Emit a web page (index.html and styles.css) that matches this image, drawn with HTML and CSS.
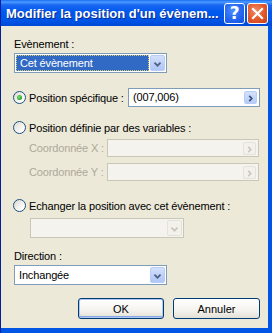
FILE: index.html
```html
<!DOCTYPE html>
<html lang="fr">
<head>
<meta charset="utf-8">
<title>Modifier la position</title>
<link rel="stylesheet" href="styles.css">
</head>
<body>
<div class="win">
  <div class="titlebar">
    <span class="title">Modifier la position d'un évènem...</span>
    <div class="tbtns">
      <span class="tb help">?</span>
      <span class="tb close"><svg width="19" height="19" viewBox="0 0 19 19"><path d="M5 5 L14 14 M14 5 L5 14" stroke="#fff" stroke-width="2.2" fill="none" stroke-linecap="square"/></svg></span>
    </div>
  </div>
  <div class="client">
    <div class="lbl">Evènement :</div>
    <div class="combo c1">
      <div class="val selected"><span>Cet évènement</span></div>
      <span class="arr"><svg width="15" height="16" viewBox="0 0 15 16"><path d="M4 6.5 L7.5 10 L11 6.5" stroke="#4d6185" stroke-width="2" fill="none"/></svg></span>
    </div>

    <div class="row r1">
      <span class="radio on"></span>
      <span class="rlabel w1">Position spécifique :</span>
      <div class="field f1">
        <span class="ftext">(007,006)</span>
        <span class="fbtn"><svg width="13" height="13" viewBox="0 0 13 13"><path d="M5 3.5 L8 6.5 L5 9.5" stroke="#3a4f78" stroke-width="2" fill="none"/></svg></span>
      </div>
    </div>

    <div class="row r2">
      <span class="radio"></span>
      <span class="rlabel">Position définie par des variables :</span>
    </div>

    <div class="row coord cx">
      <span class="clabel">Coordonnée X :</span>
      <div class="field dis f2">
        <span class="ftext"></span>
        <span class="fbtn"><svg width="13" height="13" viewBox="0 0 13 13"><path d="M5 3.5 L8 6.5 L5 9.5" stroke="#c9c7ba" stroke-width="2" fill="none"/></svg></span>
      </div>
    </div>

    <div class="row coord cy">
      <span class="clabel">Coordonnée Y :</span>
      <div class="field dis f2">
        <span class="ftext"></span>
        <span class="fbtn"><svg width="13" height="13" viewBox="0 0 13 13"><path d="M5 3.5 L8 6.5 L5 9.5" stroke="#c9c7ba" stroke-width="2" fill="none"/></svg></span>
      </div>
    </div>

    <div class="row r3">
      <span class="radio"></span>
      <span class="rlabel">Echanger la position avec cet évènement :</span>
    </div>
    <div class="combo dis c2">
      <div class="val"></div>
      <span class="arr"><svg width="15" height="16" viewBox="0 0 15 16"><path d="M4 6.5 L7.5 10 L11 6.5" stroke="#c9c7ba" stroke-width="2" fill="none"/></svg></span>
    </div>

    <div class="lbl l2">Direction :</div>
    <div class="combo c3">
      <div class="val"><span>Inchangée</span></div>
      <span class="arr"><svg width="15" height="16" viewBox="0 0 15 16"><path d="M4 6.5 L7.5 10 L11 6.5" stroke="#4d6185" stroke-width="2" fill="none"/></svg></span>
    </div>

    <div class="buttons">
      <button class="btn default">OK</button>
      <button class="btn cancel">Annuler</button>
    </div>
  </div>
</div>
</body>
</html>
```
FILE: styles.css
```css
* { box-sizing: border-box; }
html, body { margin: 0; padding: 0; }
body {
  width: 272px;
  height: 333px;
  overflow: hidden;
  font-family: "Liberation Sans", Arial, sans-serif;
  font-size: 11px;
  letter-spacing: -0.15px;
  color: #000;
  background: #0055e5;
}
.win {
  width: 272px;
  height: 333px;
  display: flex;
  flex-direction: column;
  background: #0055e5;
  border-left: 1px solid #00209a;
}
.titlebar {
  height: 26px;
  flex: none;
  display: flex;
  align-items: center;
  padding: 0 4px 0 5px;
  background: linear-gradient(#1a6cf4 0, #4b9bff 2px, #1a66f2 5px, #0058ee 12px, #0055e8 20px, #0049d6 26px);
}
.title {
  flex: 1;
  color: #fff;
  font-weight: bold;
  font-size: 13px;
  letter-spacing: 0;
  white-space: nowrap;
  text-shadow: 1px 1px 0 #0a2a8a;
  overflow: hidden;
}
.tbtns { display: flex; gap: 2px; }
.tb {
  width: 21px;
  height: 21px;
  border: 1px solid #fff;
  border-radius: 3px;
  display: flex;
  align-items: center;
  justify-content: center;
}
.help {
  background: radial-gradient(circle at 40% 35%, #4b8dff 0, #2a6df2 45%, #0f4fe0 100%);
  color: #fff;
  font-family: "DejaVu Sans", sans-serif;
  font-weight: bold;
  font-size: 17px;
  line-height: 1;
}
.close {
  background: radial-gradient(circle at 40% 35%, #f08b66 0, #e35a2e 50%, #c9401a 100%);
}
.client {
  flex: 1;
  background: #ece9d8;
  margin: 0 4px 5px 0;
  padding: 12px 8px 0 13px;
  display: flex;
  flex-direction: column;
}
.lbl { height: 13px; line-height: 13px; }
.l2 { margin-top: 12px; }

.combo {
  margin-top: 2px;
  width: 153px;
  height: 20px;
  border: 1px solid #7f9db9;
  background: #fff;
  display: flex;
  align-items: center;
  padding: 1px;
  flex: none;
}
.combo .val {
  flex: 1;
  height: 16px;
  line-height: 14px;
  padding: 0 2px;
  display: flex;
}
.combo .val span { padding: 1px 1px; }
.combo .val.selected {
  background: #316ac5;
  color: #fff;
  border: 1px dotted #d9c970;
  margin-right: 1px;
}
.combo .val.selected span { padding: 0 1px; }
.arr {
  width: 15px;
  height: 16px;
  border: 1px solid #b9ccf7;
  border-radius: 2px;
  background: linear-gradient(#d4e0fb, #bccff8 60%, #b0c6f6);
  display: flex;
}
.combo.dis {
  margin-top: 6px;
  margin-left: 16px;
  width: 154px;
  border-color: #c9c7ba;
  background: #f4f3ee;
}
.combo.dis .arr {
  border-color: #e4e2da;
  background: #f2f1eb;
}

.row { display: flex; align-items: center; flex: none; }
.r1 { height: 19px; margin-top: 15px; }
.r2 { height: 13px; margin-top: 14px; }
.r3 { height: 13px; margin-top: 18px; }
.cx { height: 18px; margin-top: 5px; }
.cy { height: 18px; margin-top: 6px; }

.radio {
  width: 13px;
  height: 13px;
  border-radius: 50%;
  border: 1px solid #1c5180;
  background: linear-gradient(135deg, #dcd9cf, #fff 80%);
  margin-left: -1px;
  margin-right: 3px;
  position: relative;
  flex: none;
}
.radio.on::after {
  content: "";
  position: absolute;
  left: 3px;
  top: 3px;
  width: 5px;
  height: 5px;
  border-radius: 50%;
  background: radial-gradient(circle at 40% 40%, #7de37d, #21a121 70%);
}
.rlabel { white-space: nowrap; }
.w1 { width: 99px; flex: none; }

.field {
  height: 100%;
  border: 1px solid #7f9db9;
  background: #fff;
  display: flex;
  align-items: center;
  padding: 0 2px 0 4px;
}
.f1 { width: 132px; }
.ftext { flex: 1; line-height: 15px; }
.fbtn {
  width: 13px;
  height: 13px;
  border: 1px solid #b9ccf7;
  border-radius: 2px;
  background: linear-gradient(#d4e0fb, #b6cbf7);
  display: flex;
}
.coord .clabel {
  width: 78px;
  margin-left: 15px;
  color: #aca899;
  white-space: nowrap;
  flex: none;
}
.field.dis {
  border-color: #c9c7ba;
  background: #f4f3ee;
  width: 152px;
}
.field.dis .fbtn {
  border-color: #e4e2da;
  background: #f2f1eb;
}

.buttons {
  margin-top: 13px;
  display: flex;
  justify-content: flex-end;
  gap: 9px;
}
.btn {
  height: 21px;
  border: 1px solid #003c74;
  border-radius: 3px;
  background: linear-gradient(#ffffff, #f4f3ee 60%, #e3e0d6);
  font-family: "Liberation Sans", Arial, sans-serif;
  font-size: 11px;
  color: #000;
  padding: 0;
}
.btn.default {
  width: 86px;
  box-shadow: inset 0 0 0 1px #b0c7f3, inset 0 -1px 0 1px #86a9e4;
}
.btn.cancel { width: 87px; }
```
